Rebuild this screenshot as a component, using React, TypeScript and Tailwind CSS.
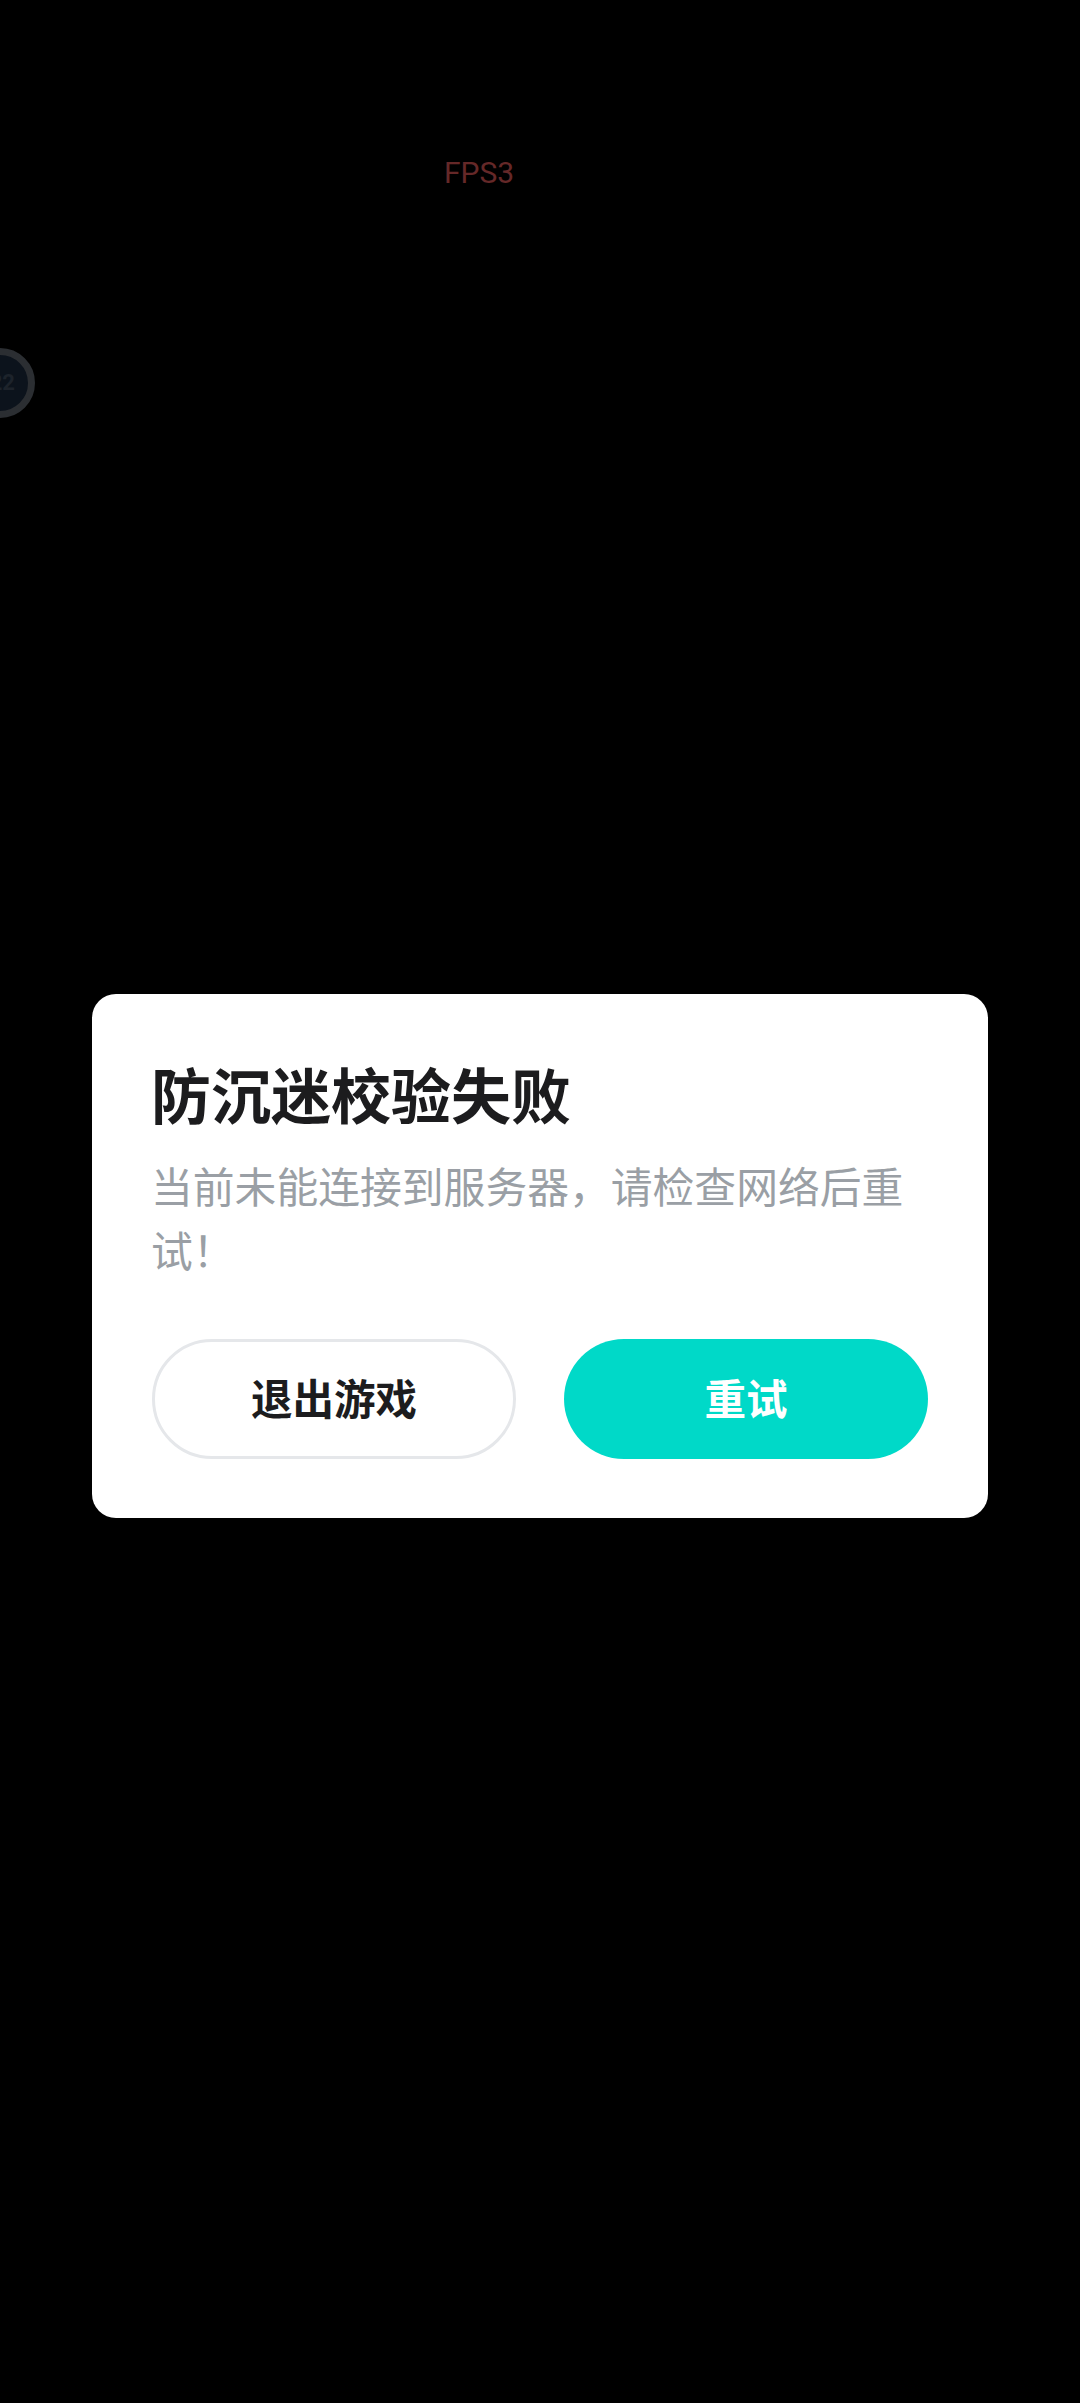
import React from 'react';

const cjk = 'font-["Noto_Sans_CJK_SC","Noto_Sans",sans-serif]';

export default function App() {
  return (
    <div className={`relative w-[1080px] h-[2403px] overflow-hidden bg-black flex flex-col items-center pt-[994px] ${cjk}`}>
      {/* debug overlays */}
      <div className='absolute left-[444px] top-[155px] font-["Roboto",sans-serif] text-[30px] leading-[36px] text-[#652828]'>
        FPS3
      </div>
      <div className="absolute left-[-35px] top-[348px] w-[70px] h-[70px] rounded-full border-[7px] border-[#2b2e32] bg-[#0c131c] flex items-center justify-end pr-[13px]">
        <span className='font-["Roboto",sans-serif] font-bold text-[22px] leading-none text-[#1d232b]'>22</span>
      </div>

      {/* dialog */}
      <div className="w-[896px] h-[524px] bg-white rounded-[24px] pl-[59px] pr-[60px] flex flex-col">
        <h1 className="mt-[57px] text-[60px] leading-[84px] font-bold text-[#1c1c1e]">防沉迷校验失败</h1>
        <p className="mt-[18px] text-[41.8px] leading-[64px] text-[#9a9fa5]">
          当前未能连接到服务器，请检查网络后重试！
        </p>
        <div className="mt-[58px] pl-[1px] flex gap-[48px]">
          <button className="w-[364px] h-[120px] pb-[3px] rounded-full border-[3px] border-[#e5e7ea] bg-white text-[41.5px] font-bold text-[#1c1c1e]">
            退出游戏
          </button>
          <button className="w-[364px] h-[120px] pb-[3px] rounded-full bg-[#00d9c8] text-[41.5px] font-bold text-white">
            重试
          </button>
        </div>
      </div>
    </div>
  );
}
